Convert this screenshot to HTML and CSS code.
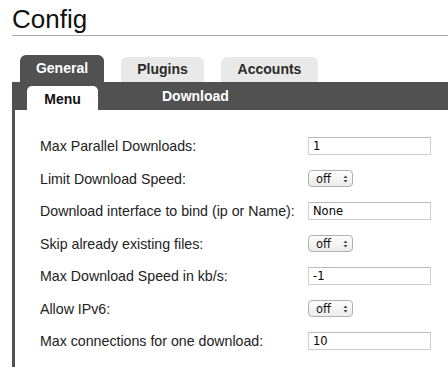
FILE: index.html
```html
<!DOCTYPE html>
<html>
<head>
<meta charset="utf-8">
<link rel="stylesheet" href="styles.css">
</head>
<body>
<div class="page">
  <h1 class="title">Config</h1>
  <div class="tabs">
    <div class="tab tab-active tab-general">General</div>
    <div class="tab tab-plugins">Plugins</div>
    <div class="tab tab-accounts">Accounts</div>
  </div>
  <div class="subbar">
    <div class="subtab subtab-active">Menu</div>
    <div class="subtab subtab-download">Download</div>
  </div>
  <div class="content">
    <div class="row"><span class="label">Max Parallel Downloads:</span><span class="input">1</span></div>
    <div class="row"><span class="label">Limit Download Speed:</span><span class="select"><span class="sel-text">off</span><svg class="sel-arrows" width="5" height="8" viewBox="0 0 5 8"><path d="M2.5 0.5 L4.5 3 L0.5 3 Z M2.5 7.5 L4.5 5 L0.5 5 Z" fill="#444"/></svg></span></div>
    <div class="row"><span class="label">Download interface to bind (ip or Name):</span><span class="input">None</span></div>
    <div class="row"><span class="label">Skip already existing files:</span><span class="select"><span class="sel-text">off</span><svg class="sel-arrows" width="5" height="8" viewBox="0 0 5 8"><path d="M2.5 0.5 L4.5 3 L0.5 3 Z M2.5 7.5 L4.5 5 L0.5 5 Z" fill="#444"/></svg></span></div>
    <div class="row"><span class="label">Max Download Speed in kb/s:</span><span class="input">-1</span></div>
    <div class="row"><span class="label">Allow IPv6:</span><span class="select"><span class="sel-text">off</span><svg class="sel-arrows" width="5" height="8" viewBox="0 0 5 8"><path d="M2.5 0.5 L4.5 3 L0.5 3 Z M2.5 7.5 L4.5 5 L0.5 5 Z" fill="#444"/></svg></span></div>
    <div class="row"><span class="label">Max connections for one download:</span><span class="input">10</span></div>
  </div>
</div>
</body>
</html>
```
FILE: styles.css
```css
html, body {
  margin: 0;
  padding: 0;
  background: #fff;
  overflow: hidden;
}
body {
  font-family: "Liberation Sans", Arial, sans-serif;
  color: #222;
}
.page {
  padding-left: 12px;
}
.title {
  margin: 0;
  padding-top: 4px;
  height: 31px;
  font-size: 26px;
  line-height: 30px;
  font-weight: normal;
  color: #111;
  border-bottom: 1px solid #aaa;
}
.tabs {
  display: flex;
  gap: 17px;
  padding-left: 8px;
  margin-top: 19px;
  height: 27px;
}
.tab {
  height: 27px;
  line-height: 27px;
  font-size: 14px;
  font-weight: bold;
  text-align: center;
  border-radius: 6px 6px 0 0;
  background: #e9e9e9;
  color: #2a2a2a;
}
.tab-active {
  background: #515151;
  color: #fff;
}
.tab-general { width: 84px; }
.tab-plugins { width: 83px; height: 25px; margin-top: 2px; line-height: 25px; }
.tab-accounts { width: 97px; height: 25px; margin-top: 2px; line-height: 25px; }
.subbar {
  display: flex;
  align-items: flex-end;
  background: #515151;
  height: 28px;
  padding-left: 15px;
}
.subtab {
  font-size: 14px;
  font-weight: bold;
  color: #fff;
  height: 24px;
  line-height: 26px;
  text-align: center;
}
.subtab-active {
  width: 71px;
  background: #fff;
  color: #111;
  border-radius: 5px 5px 0 0;
}
.subtab-download {
  margin-left: 64px;
  line-height: 14px;
  align-self: center;
  height: auto;
}
.content {
  box-sizing: border-box;
  border-left: 3px solid #515151;
  padding: 20px 0 0 25px;
  height: 257px;
}
.row {
  display: flex;
  align-items: center;
  height: 32.5px;
}
.label {
  width: 268px;
  font-size: 14.2px;
  color: #222;
}
.input {
  box-sizing: border-box;
  width: 123px;
  height: 18px;
  border: 1px solid #cfcfcf;
  border-top-color: #b9b9b9;
  padding-left: 4px;
  font-family: "DejaVu Sans", sans-serif;
  font-size: 11.5px;
  line-height: 16px;
  color: #000;
  background: #fff;
}
.select {
  box-sizing: border-box;
  display: flex;
  align-items: center;
  width: 45px;
  height: 17px;
  border: 1px solid #b0b0b0;
  border-radius: 4px;
  background: linear-gradient(#fdfdfd, #ececec);
  padding-left: 7px;
  font-family: "DejaVu Sans", sans-serif;
  font-size: 11.5px;
  color: #111;
}
.sel-text {
  width: 27px;
}
.sel-arrows {
  display: block;
}
```
